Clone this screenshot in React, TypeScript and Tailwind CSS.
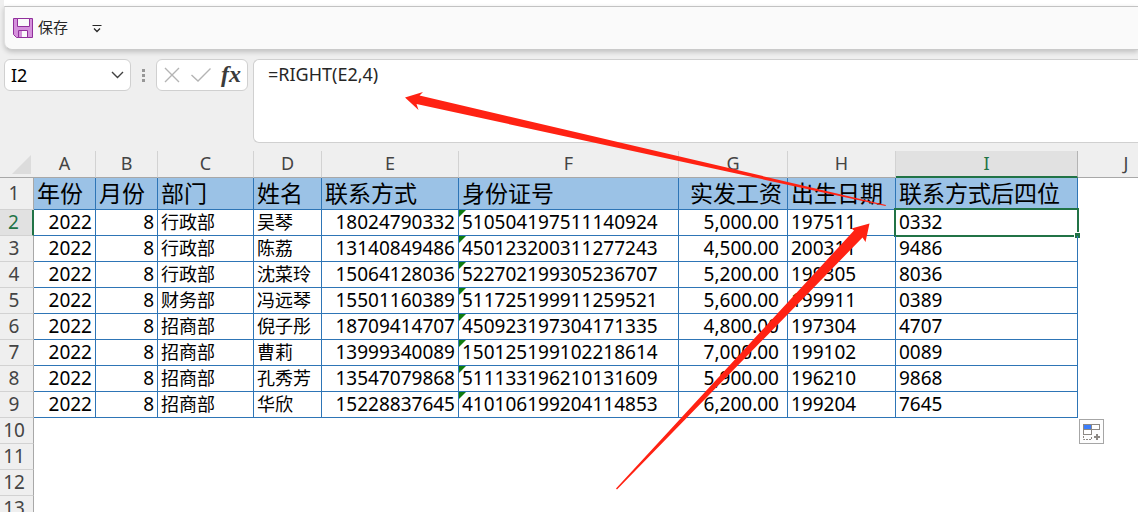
import React, { useState } from "react";

/* ======================================================
TYPES
====================================================== */

type Align = "left" | "right";

interface Column {
  letter: string;
  title: string;
  width: string;
  align: Align;
  titleAlign?: Align;
  cjk?: boolean;
  flagged?: boolean;
}

/* ======================================================
DATA
====================================================== */

const columns: Column[] = [
  { letter: "A", title: "年份", width: "w-[62px]", align: "right" },
  { letter: "B", title: "月份", width: "w-[62px]", align: "right" },
  { letter: "C", title: "部门", width: "w-[96px]", align: "left", cjk: true },
  { letter: "D", title: "姓名", width: "w-[68px]", align: "left", cjk: true },
  { letter: "E", title: "联系方式", width: "w-[137px]", align: "right" },
  { letter: "F", title: "身份证号", width: "w-[220px]", align: "left", flagged: true },
  { letter: "G", title: "实发工资", width: "w-[109px]", align: "right", titleAlign: "right" },
  { letter: "H", title: "出生日期", width: "w-[108px]", align: "left" },
  { letter: "I", title: "联系方式后四位", width: "w-[182px]", align: "left" },
];

const records: string[][] = [
  ["2022", "8", "行政部", "吴琴", "18024790332", "510504197511140924", "5,000.00", "197511", "0332"],
  ["2022", "8", "行政部", "陈荔", "13140849486", "450123200311277243", "4,500.00", "200311", "9486"],
  ["2022", "8", "行政部", "沈菜玲", "15064128036", "522702199305236707", "5,200.00", "199305", "8036"],
  ["2022", "8", "财务部", "冯远琴", "15501160389", "511725199911259521", "5,600.00", "199911", "0389"],
  ["2022", "8", "招商部", "倪子彤", "18709414707", "450923197304171335", "4,800.00", "197304", "4707"],
  ["2022", "8", "招商部", "曹莉", "13999340089", "150125199102218614", "7,000.00", "199102", "0089"],
  ["2022", "8", "招商部", "孔秀芳", "13547079868", "511133196210131609", "5,900.00", "196210", "9868"],
  ["2022", "8", "招商部", "华欣", "15228837645", "410106199204114853", "6,200.00", "199204", "7645"],
];

const emptyRows = [10, 11, 12, 13];

/* ======================================================
ICONS
====================================================== */

const SaveIcon = () => (
  <svg width="20" height="20" viewBox="0 0 20 20" aria-hidden="true">
    <path d="M0.5 0.5H19.5V19.5H3.5L0.5 16.5Z" fill="#d591dc" stroke="#91309c" />
    <path d="M4.5 0.5H16.5V8.5H4.5Z" fill="#fafafa" stroke="#91309c" />
    <path d="M5.5 19.5V12.5H14.5V19.5Z" fill="#fafafa" stroke="#91309c" />
    <path d="M6 13H9V19H6Z" fill="#d591dc" />
  </svg>
);

const CustomizeIcon = () => (
  <svg width="10" height="9" viewBox="0 0 10 9" fill="none" stroke="#262626" aria-hidden="true">
    <path d="M0.5 1.5H9.5" />
    <path d="M2 4.5L5 7.5L8 4.5" strokeWidth="1.3" />
  </svg>
);

const PasteOptionsIcon = () => (
  <svg width="18" height="18" viewBox="0 0 18 18" aria-hidden="true">
    <rect x="0.5" y="1.5" width="8" height="5" fill="#3b7dfb" stroke="#8c8884" />
    <rect x="8.5" y="1.5" width="8" height="5" fill="#fff" stroke="#8c8884" />
    <rect x="0.5" y="6.5" width="8" height="5" fill="#fff" stroke="#8c8884" />
    <path d="M0.5 13V16.5H8.5V13" fill="none" stroke="#8c8884" strokeDasharray="2 1" />
    <path d="M14 11V17M11 14H17" stroke="#8c8884" strokeWidth="2" />
  </svg>
);

/* ======================================================
COMPONENT
====================================================== */

const App: React.FC = () => {
  const [cellName, setCellName] = useState("I2");
  const [formula, setFormula] = useState("=RIGHT(E2,4)");

  /* ======================================================
  RENDER HELPERS
  ====================================================== */

  const renderToolbar = () => (
    <div className="ml-1 bg-white pt-1.5">
      <div className="-ml-1 bg-[#efefef] pl-1">
        <div className="flex h-11 items-center rounded-bl-lg border-y border-l border-t-[#c2c2c2] border-b-[#cacaca] border-l-[#e0e0e0] bg-[#fafafa] pl-2 shadow-[0_2px_5px_rgba(0,0,0,0.2)]">
          <button className="flex items-center gap-[5px] text-[15px] leading-5 text-[#262626]">
            <SaveIcon />
            <span className="pb-0.5">保存</span>
          </button>
          <button aria-label="自定义快速访问工具栏" className="ml-[22px] p-0.5">
            <CustomizeIcon />
          </button>
        </div>
      </div>
    </div>
  );

  const renderFormulaBar = () => (
    <div className="flex items-start pt-[9px] pb-2 pl-1">
      <div className="flex h-8 w-[127px] shrink-0 items-center rounded-md border border-[#d0d0d0] bg-white px-1.5">
        <input
          aria-label="名称框"
          value={cellName}
          onChange={(e) => setCellName(e.target.value)}
          className="w-full min-w-0 text-lg leading-6 text-black outline-none"
        />
        <button aria-label="展开名称框">
          <svg width="13" height="8" viewBox="0 0 13 8" fill="none" stroke="#404040" strokeWidth="1.4">
            <path d="M1 1L6.5 6.5L12 1" />
          </svg>
        </button>
      </div>

      <div className="mr-[11px] ml-2.5 flex h-8 w-1 shrink-0 flex-col items-center justify-center gap-0.5">
        <span className="size-[3px] bg-[#979797]" />
        <span className="size-[3px] bg-[#979797]" />
        <span className="size-[3px] bg-[#979797]" />
      </div>

      <div className="flex h-8 w-[92px] shrink-0 items-center justify-between rounded-md border border-[#d0d0d0] bg-white pr-1.5 pl-[7px]">
        <button aria-label="取消">
          <svg width="16" height="16" viewBox="0 0 16 16" fill="none" stroke="#b4b4b4" strokeWidth="1.4">
            <path d="M1 1L15 15M15 1L1 15" />
          </svg>
        </button>
        <button aria-label="输入">
          <svg width="20" height="14" viewBox="0 0 20 14" fill="none" stroke="#b4b4b4" strokeWidth="1.4">
            <path d="M0.5 7L7 13L19.5 0.5" />
          </svg>
        </button>
        <button
          aria-label="插入函数"
          className="pb-0.5 font-['Liberation_Serif',serif] text-2xl leading-6 font-bold text-[#3b3b3b] italic"
        >
          fx
        </button>
      </div>

      <div className="ml-[5px] h-[84px] grow rounded-l-md border-y border-l border-[#d0d0d0] bg-white">
        <textarea
          aria-label="编辑栏"
          value={formula}
          onChange={(e) => setFormula(e.target.value)}
          className="block h-full w-full resize-none px-3.5 py-0.5 text-lg leading-6 text-[#262626] outline-none"
        />
      </div>
    </div>
  );

  const renderRowNumber = (row: number) => (
    <th
      scope="row"
      className={`border-r border-b p-0 pb-0.5 text-center text-[19px] leading-[22px] font-normal ${
        row === 2
          ? "border-r-2 border-r-[#217346] border-b-[#d2d2d2] bg-[#e1e1e1] text-[#217346]"
          : "border-r-[#a8a8a8] border-b-[#d2d2d2] bg-[#efefef] text-[#444]"
      }`}
    >
      <div className="pr-[5px]">{row}</div>
    </th>
  );

  const renderSelection = () => (
    <div className="pointer-events-none absolute -inset-0.5 border-2 border-[#217346]">
      <span className="absolute -right-[3px] -bottom-[3px] size-1.5 border-t border-l border-white bg-[#217346]" />
    </div>
  );

  const renderSheet = () => (
    <table className="w-full min-w-[1174px] table-fixed border-separate border-spacing-0">
      <colgroup>
        <col className="w-[34px]" />
        {columns.map((col) => (
          <col key={col.letter} className={col.width} />
        ))}
        <col />
      </colgroup>

      <thead>
        <tr className="h-[27px]">
          <th className="border-b border-[#a8a8a8] p-0">
            <svg width="19" height="19" viewBox="0 0 19 19" className="mr-[3px] ml-auto" aria-hidden="true">
              <path d="M19 0V19H0Z" fill="#dcdcdc" />
            </svg>
          </th>
          {columns.map((col) => (
            <th
              key={col.letter}
              scope="col"
              className={`border-r p-0 pb-0.5 text-lg leading-[22px] font-normal ${
                col.letter === "I"
                  ? "border-r-[#b4b4b4] border-b-2 border-b-[#217346] bg-[#e1e1e1] text-[#217346]"
                  : "border-r-[#d2d2d2] border-b border-b-[#a8a8a8] text-[#444]"
              }`}
            >
              {col.letter}
            </th>
          ))}
          <th
            scope="col"
            className="border-b border-[#a8a8a8] p-0 pb-0.5 text-lg leading-[22px] font-normal text-[#444]"
          >
            J
          </th>
        </tr>
      </thead>

      <tbody className="bg-white text-black">
        <tr className="h-8">
          {renderRowNumber(1)}
          {columns.map((col) => (
            <td
              key={col.letter}
              className={`border-r border-b border-[#2e75b6] bg-[#9bc2e6] py-0 pb-0.5 text-[23px] leading-7 whitespace-nowrap ${
                col.titleAlign === "right" ? "pr-[5px] text-right" : "pl-[3px] text-left"
              }`}
            >
              {col.title}
            </td>
          ))}
          <td />
        </tr>

        {records.map((record, i) => (
          <tr key={record[5]} className="h-[26px]">
            {renderRowNumber(i + 2)}
            {columns.map((col, c) => (
              <td
                key={col.letter}
                className={`relative border-r border-b border-[#2e75b6] pt-0 pb-0.5 leading-[22px] whitespace-nowrap ${
                  col.align === "right" ? "text-right" : "text-left"
                } ${col.cjk ? "text-lg" : "text-[19px]"} ${col.letter === "G" ? "pr-2" : "px-[3px]"}`}
              >
                {col.flagged && (
                  <span className="absolute top-0 left-0 size-[7px] bg-[#107c10] [clip-path:polygon(0_0,100%_0,0_100%)]" />
                )}
                {record[c]}
                {i === 0 && col.letter === "I" && renderSelection()}
              </td>
            ))}
            <td />
          </tr>
        ))}

        {emptyRows.map((row) => (
          <tr key={row} className="h-[26px]">
            {renderRowNumber(row)}
            <td colSpan={columns.length + 1} />
          </tr>
        ))}
      </tbody>
    </table>
  );

  /* ======================================================
  MAIN UI
  ====================================================== */

  return (
    <div className="relative h-screen overflow-hidden bg-[#efefef] font-['Noto_Sans','Noto_Sans_CJK_SC',sans-serif]">
      {renderToolbar()}
      {renderFormulaBar()}
      {renderSheet()}

      {/* AUTOFILL OPTIONS */}
      <button
        aria-label="自动填充选项"
        className="absolute top-[419px] left-[1079px] flex size-[25px] items-center justify-center border border-[#a6a6a6] bg-[#fdfdfd]"
      >
        <PasteOptionsIcon />
      </button>

      {/* ANNOTATION ARROWS */}
      <svg
        width="1138"
        height="512"
        viewBox="0 0 1138 512"
        fill="#ff2213"
        className="pointer-events-none absolute top-0 left-0"
        aria-hidden="true"
      >
        <path d="M405 97.5L423 92L419.5 95.5L886 205L885.5 206L416.5 104L418.5 110Z" />
        <path d="M869.5 223.5L865.5 242L862.5 237.5L617 489.5L616 488.5L854 230.5L851.5 228.5Z" />
      </svg>
    </div>
  );
};

export default App;
